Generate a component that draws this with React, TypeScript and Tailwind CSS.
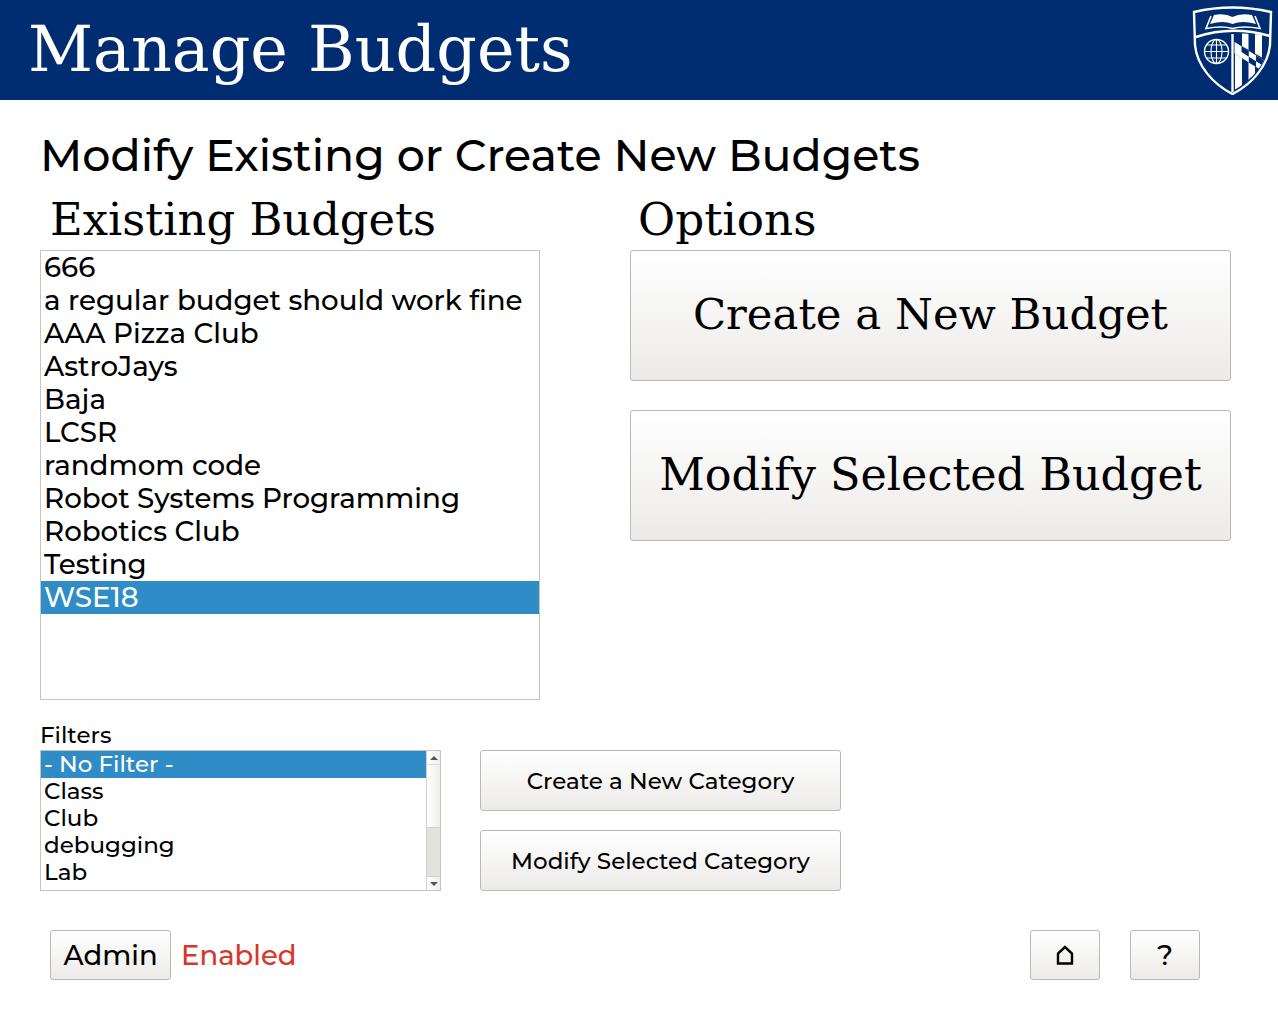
const budgets = [
  "666",
  "a regular budget should work fine",
  "AAA Pizza Club",
  "AstroJays",
  "Baja",
  "LCSR",
  "randmom code",
  "Robot Systems Programming",
  "Robotics Club",
  "Testing",
  "WSE18",
];

const filters = ["- No Filter -", "Class", "Club", "debugging", "Lab"];

const sans = "font-['Montserrat','Inter','Noto_Sans',sans-serif]";
const slab = "font-['DejaVu_Serif',serif]";
const btn =
  "border border-[#b9b9b9] rounded-[3px] bg-gradient-to-b from-white to-[#ecebe9] text-black flex items-center justify-center";

const Logo = () => (
  <svg width="84" height="90" viewBox="21 5 84 90" fill="none">
    <defs>
      <clipPath id="flag">
        <path d="M64.3 33 L99 35 L98.5 46 C97 62 82 80 64.3 90 Z" />
      </clipPath>
      <clipPath id="above">
        <path d="M64.3 30 H100 V62 L64.3 41.7 Z" />
      </clipPath>
      <clipPath id="below">
        <path d="M64.3 53.3 L100 75 V95 H64.3 Z" />
      </clipPath>
    </defs>
    <path
      d="M24 12 Q62 3 101 12 L100 45 C98 66 82 84 62.5 94 C43 84 27 66 25 45 Z"
      stroke="#fff"
      strokeWidth="2.4"
    />
    <path d="M26 37 Q62 25 100 36" stroke="#fff" strokeWidth="2.4" />
    <path d="M44 15 Q55 13 62.5 17 Q70 13 82 15 L86 24 Q72 20 62.5 24 Q53 20 40 24 Z" fill="#fff" />
    <path d="M41 16 L36 28.5 Q52 25.5 62.5 28.5 Q73 25.5 90 28.5 L85 16" stroke="#fff" strokeWidth="1.6" />
    <circle cx="46.5" cy="51.5" r="12" stroke="#fff" strokeWidth="1.4" />
    <ellipse cx="46.5" cy="51.5" rx="5.5" ry="12" stroke="#fff" strokeWidth="1.1" />
    <path d="M34.5 51.5 H58.5 M36.5 45 H56.5 M36.5 58 H56.5 M46.5 39.5 V63.5" stroke="#fff" strokeWidth="1.1" />
    <path d="M62.5 34 V92" stroke="#fff" strokeWidth="2.4" />
    <g clipPath="url(#flag)">
      <g clipPath="url(#above)" fill="#fff">
        <rect x="72" y="30" width="6.5" height="40" />
        <rect x="85" y="30" width="7" height="40" />
      </g>
      <g clipPath="url(#below)" fill="#fff">
        <rect x="65" y="50" width="7" height="45" />
        <rect x="78.5" y="50" width="6.5" height="45" />
      </g>
      <path d="M64.3 41.7 L93.3 60 V71.6 L64.3 53.3 Z" fill="#fff" />
      <path
        d="M71.55 46.3 L78.8 50.85 V56.65 L71.55 52.1 Z M78.8 56.65 L86.05 61.2 V67 L78.8 62.45 Z M86.05 55.4 L93.3 60 V65.8 L86.05 61.2 Z"
        fill="#002d72"
      />
    </g>
  </svg>
);

export default function App() {
  return (
    <div className={`w-[1278px] h-[1019px] bg-white text-black ${sans}`}>
      <div className="h-[100px] bg-[#002d72] flex items-center justify-between pl-[28px] pr-[3px]">
        <h1 className={`${slab} text-[63.5px] leading-none text-white`}>Manage Budgets</h1>
        <Logo />
      </div>

      <div className="px-[40px]">
        <h2 className="mt-[29px] h-[51px] text-[44.3px] leading-[52px] font-medium">
          Modify Existing or Create New Budgets
        </h2>

        <div className="flex mt-[15px]">
          <div className="w-[500px]">
            <div className={`h-[55px] pl-[10px] ${slab} text-[44.8px] leading-[50px]`}>Existing Budgets</div>
            <div className="h-[450px] border border-[#c4c4c4] text-[27.7px] leading-[32px] font-medium">
              {budgets.map((b) => (
                <div
                  key={b}
                  className={`h-[33px] pl-[3px] whitespace-nowrap ${b === "WSE18" ? "bg-[#308cc6] text-white" : ""}`}
                >
                  {b}
                </div>
              ))}
            </div>
          </div>

          <div className="w-[601px] ml-[90px]">
            <div className={`h-[55px] pl-[8px] ${slab} text-[45.3px] leading-[50px]`}>Options</div>
            <div className={`${btn} h-[131px] pb-[2px] ${slab} text-[43.4px]`}>Create a New Budget</div>
            <div className={`${btn} h-[131px] mt-[29px] ${slab} text-[44.5px]`}>Modify Selected Budget</div>
          </div>
        </div>

        <div className="h-[28px] mt-[22px] text-[23px] leading-[27px] font-medium">Filters</div>
        <div className="flex">
          <div className="w-[401px] h-[141px] border border-[#c4c4c4] flex text-[23px] leading-[27px] font-medium">
            <div className="flex-1">
              {filters.map((f, i) => (
                <div key={f} className={`h-[27px] pl-[3px] ${i === 0 ? "bg-[#308cc6] text-white" : ""}`}>
                  {f}
                </div>
              ))}
            </div>
            <div className="w-[14px] border-l border-[#d0d0d0] flex flex-col bg-gradient-to-r from-white to-[#efeeec]">
              <div className="h-[14px] flex items-center justify-center border-b border-[#dcdcdc]">
                <div className="w-0 h-0 border-x-[4px] border-x-transparent border-b-[4px] border-b-[#555]" />
              </div>
              <div className="h-[62px]" />
              <div className="h-[50px] bg-[#e2e1de] border-y border-[#cfcfcf]" />
              <div className="flex-1 flex items-center justify-center">
                <div className="w-0 h-0 border-x-[4px] border-x-transparent border-t-[4px] border-t-[#555]" />
              </div>
            </div>
          </div>
          <div className="w-[361px] ml-[39px]">
            <div className={`${btn} h-[61px] pt-[2px] text-[23px] font-medium`}>Create a New Category</div>
            <div className={`${btn} h-[61px] mt-[19px] pt-[2px] text-[23px] font-medium`}>Modify Selected Category</div>
          </div>
        </div>

        <div className="flex items-center mt-[39px] ml-[10px]">
          <div className={`${btn} w-[121px] h-[50px] pt-[2px] text-[27.5px] font-medium`}>Admin</div>
          <div className="ml-[10px] pt-[2px] text-[27.5px] font-medium text-[#d9362a]">Enabled</div>
          <div className={`${btn} w-[70px] h-[50px] ml-auto`}>
            <svg width="18" height="20" viewBox="0 0 18 20" fill="none" stroke="#000" strokeWidth="2.4">
              <path d="M2 18.5 V8.5 L9 2 L16 8.5 V18.5 Z" />
            </svg>
          </div>
          <div className={`${btn} w-[70px] h-[50px] ml-[30px] mr-[38px] text-[28px] font-medium`}>?</div>
        </div>
      </div>
    </div>
  );
}
